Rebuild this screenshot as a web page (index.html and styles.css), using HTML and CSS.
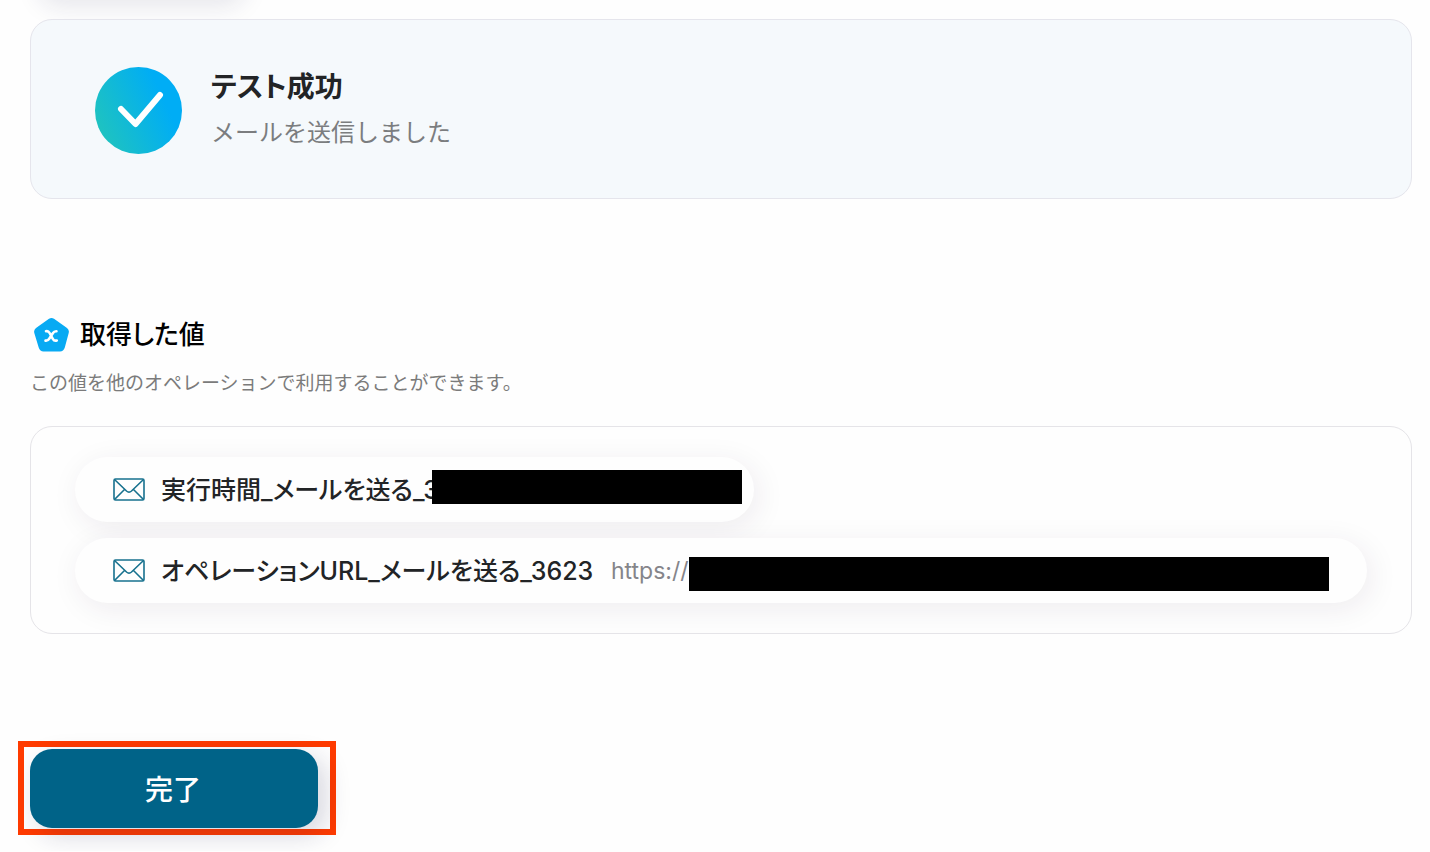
FILE: index.html
```html
<!DOCTYPE html>
<html lang="ja">
<head>
<meta charset="utf-8">
<title>テスト成功</title>
<link rel="stylesheet" href="styles.css">
</head>
<body>
<div class="previous-action"></div>
<main class="page">
  <section class="result">
    <svg class="result-icon" viewBox="0 0 87 87" aria-hidden="true">
      <defs><linearGradient id="success" x1="0" y1=".75" x2="1" y2=".3"><stop offset="0" stop-color="#20c4bd"/><stop offset=".8" stop-color="#00adf5"/></linearGradient></defs>
      <circle cx="43.500" cy="43.500" r="43.500" fill="url(#success)"/>
      <path d="M26 42 40.500 57 65 28" fill="none" stroke="#fff" stroke-width="6" stroke-linecap="round" stroke-linejoin="round"/>
    </svg>
    <div class="result-text">
      <h1 class="result-title">テスト成功</h1>
      <p class="result-message">メールを送信しました</p>
    </div>
  </section>
  <section class="values">
    <h2 class="values-title">
      <svg class="values-icon" viewBox="0 0 36 36" aria-hidden="true">
        <path d="M15 1.800Q17.500 0 20 1.800L33 11Q35.500 13 34.700 16L30.800 30.500Q29.500 34.500 26 34.500H9.500Q6 34.500 4.700 30.500L.3 16Q-.5 13 2 11Z" fill="#08aaf3"/>
        <path d="M12 14.200Q14.300 13.600 15.600 16L18.800 21.800Q20.200 24.300 22.800 23.500M22.500 14.200Q20.200 14 18.800 16.300L15.400 21.500Q13.800 24 11.500 23.600" fill="none" stroke="#fff" stroke-width="2.600" stroke-linecap="round"/>
      </svg>
      <span>取得した値</span>
    </h2>
    <p class="values-note">この値を他のオペレーションで利用することができます。</p>
    <ul class="value-list">
      <li class="value">
        <svg class="mail" viewBox="0 0 32 23" aria-hidden="true"><rect x="1" y="1" width="30" height="21" rx="1.500"/><path d="M1.500 1.500 13.500 13Q16 15.200 18.500 13L30.500 1.500M1.500 21.500 11.500 11.500M30.500 21.500 20.500 11.500"/></svg>
        <span class="value-name">実行時間_メールを送る_3</span>
        <span class="mask mask-time"></span>
      </li>
      <li class="value">
        <svg class="mail" viewBox="0 0 32 23" aria-hidden="true"><rect x="1" y="1" width="30" height="21" rx="1.500"/><path d="M1.500 1.500 13.500 13Q16 15.200 18.500 13L30.500 1.500M1.500 21.500 11.500 11.500M30.500 21.500 20.500 11.500"/></svg>
        <span class="value-name value-name-url">オペレーションURL_メールを送る_3623</span>
        <span class="value-url">https://</span>
        <span class="mask mask-url"></span>
      </li>
    </ul>
  </section>
  <div class="highlight"><button class="done" type="button">完了</button></div>
</main>
</body>
</html>
```
FILE: styles.css
```css
* { box-sizing: border-box; }
html { overflow: hidden; }
body {
  margin: 0;
  background: #fefefe;
  color: #222426;
  font-family: Inter, "Noto Sans CJK JP", sans-serif;
  font-feature-settings: "palt";
}
h1, h2, p, ul { margin: 0; padding: 0; }
.previous-action {
  position: absolute;
  top: -80px;
  left: 30px;
  width: 208px;
  height: 79px;
  border-radius: 22px;
  box-shadow: 8px 8px 24px rgba(30, 30, 80, .1);
}
.page { position: relative; padding: 19px 18px 16px 30px; }
.result {
  display: flex;
  align-items: center;
  gap: 29px;
  padding: 44px 64px 42px;
  border: 1px solid #e5e5ec;
  border-radius: 22px;
  background: #f5f9fc;
}
.result-icon { width: 87px; height: 87px; flex: none; }
.result-title { font-size: 28px; line-height: 46px; font-weight: 600; }
.result-message { color: #7b7d7f; font-size: 24px; line-height: 46px; font-feature-settings: normal; }
.values { padding-top: 117px; }
.values-title {
  display: flex;
  align-items: center;
  gap: 10px;
  padding-left: 4px;
  color: #000;
  font-size: 26px;
  line-height: 38px;
  font-weight: 500;
}
.values-icon { width: 36px; height: 36px; }
.values-note {
  margin-top: 14px;
  color: #7b7b7b;
  font-size: 19px;
  line-height: 32px;
  font-feature-settings: normal;
}
.value-list {
  display: flex;
  flex-direction: column;
  align-items: flex-start;
  gap: 16px;
  margin-top: 26px;
  padding: 30px 44px;
  border: 1px solid #e5e4e8;
  border-radius: 22px;
  list-style: none;
}
.value {
  display: flex;
  align-items: center;
  max-width: 100%;
  height: 65px;
  padding: 0 38px;
  border-radius: 33px;
  background: #fefefe;
  box-shadow: 4px 6px 30px rgba(45, 30, 65, .08);
}
.value:first-child { padding-right: 12px; }
.mail { width: 32px; height: 23px; margin-right: 16px; flex: none; fill: none; stroke: #17718e; stroke-width: 1.6; }
.value-name { width: 271px; white-space: nowrap; font-size: 25px; line-height: 40px; font-weight: 500; }
.value-name-url { width: 436px; }
.value-url { margin-left: 14px; color: #85858a; font-size: 23px; line-height: 40px; }
.mask { position: relative; height: 34px; background: #000; }
.mask-time { width: 310px; margin-bottom: 6px; }
.mask-url { width: 640px; margin-top: 6px; }
.highlight {
  width: 318px;
  margin: 107px 0 0 -12px;
  padding: 2px 12px 1px 6px;
  border: 6px solid #ff3b00;
}
.done {
  display: block;
  width: 100%;
  height: 79px;
  padding: 0 2px 2px 0;
  border: 0;
  border-radius: 22px;
  background: #006388;
  color: #fff;
  font: inherit;
  font-size: 28px;
  font-weight: 500;
  box-shadow: 8px 8px 24px rgba(30, 30, 80, .17);
}
```
